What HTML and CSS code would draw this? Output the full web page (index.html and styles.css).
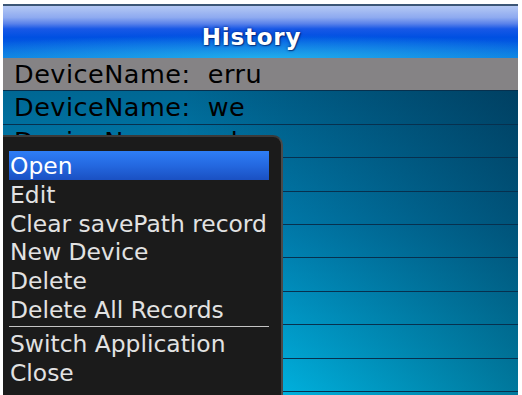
FILE: index.html
```html
<!DOCTYPE html>
<html>
<head>
<meta charset="utf-8">
<link rel="stylesheet" href="styles.css">
</head>
<body>
<div class="screen">
  <div class="titlebar"><span class="title">History</span></div>
  <div class="list">
    <div class="row row-selected">DeviceName:&nbsp; erru</div>
    <div class="row">DeviceName:&nbsp; we</div>
    <div class="row">DeviceName:&nbsp; sd</div>
    <div class="row"></div>
    <div class="row"></div>
    <div class="row"></div>
    <div class="row"></div>
    <div class="row"></div>
    <div class="row"></div>
    <div class="row"></div>
  </div>
  <div class="menu">
    <div class="item item-active">Open</div>
    <div class="item">Edit</div>
    <div class="item">Clear savePath record</div>
    <div class="item">New Device</div>
    <div class="item">Delete</div>
    <div class="item">Delete All Records</div>
    <div class="sep"></div>
    <div class="item">Switch Application</div>
    <div class="item">Close</div>
  </div>
</div>
</body>
</html>
```

FILE: styles.css
```css
html, body {
  margin: 0;
  padding: 0;
  background: #ffffff;
  overflow: hidden;
}

.screen {
  margin: 4px 4px 0 3px;
  height: 391px;
  position: relative;
  overflow: hidden;
  font-family: "DejaVu Sans", sans-serif;
}

.titlebar {
  border-top: 2px solid #3c5676;
  display: flex;
  justify-content: center;
  align-items: center;
  padding-top: 10px;
  padding-right: 18px;
  height: 42px;
  background:
    radial-gradient(ellipse 70% 45% at 50% 100%, rgba(40, 190, 240, 0.75), rgba(40, 190, 240, 0) 100%),
    linear-gradient(to bottom, #b4c8f4 0%, #8eaaf0 22%, #5a82ea 34%, #1858e6 44%, #0050e2 60%, #0662e0 80%, #0a78de 100%);
}

.title {
  color: #ffffff;
  font-weight: bold;
  font-size: 23px;
  letter-spacing: 0.8px;
  text-shadow: 0 0 3px rgba(0, 30, 110, 0.9), 1px 1px 1px rgba(0, 20, 80, 0.6);
}

.list {
  height: 337px;
  background:
    linear-gradient(to right, rgba(0, 10, 30, 0) 35%, rgba(0, 10, 30, 0.42) 100%),
    linear-gradient(to bottom, #005f8a 0%, #0088bc 50%, #00c8f8 100%);
}

.row {
  height: 33.4px;
  box-sizing: border-box;
  border-bottom: 1px solid #07304e;
  padding-left: 11px;
  font-size: 25.5px;
  line-height: 32px;
  letter-spacing: 0.5px;
  color: #000000;
  white-space: nowrap;
  overflow: hidden;
}

.row-selected {
  background: #858385;
}

.menu {
  position: absolute;
  left: 0;
  top: 131px;
  width: 260px;
  bottom: -10px;
  background: #1b1b1b;
  border-top: 2px solid #3a3a3a;
  border-right: 2px solid #4a4a4a;
  border-top-right-radius: 10px;
  padding: 14px 12px 0 6px;
}

.item {
  height: 28.8px;
  line-height: 30px;
  font-size: 23.4px;
  color: #e2e2e2;
  padding-left: 1px;
  white-space: nowrap;
}

.item-active {
  color: #ffffff;
  background: linear-gradient(to bottom, #2e7ef6 0%, #2468e0 50%, #1a50c2 100%);
}

.sep {
  height: 1px;
  background: #c4c4c4;
  margin: 2px 0 2px 0;
}
```
